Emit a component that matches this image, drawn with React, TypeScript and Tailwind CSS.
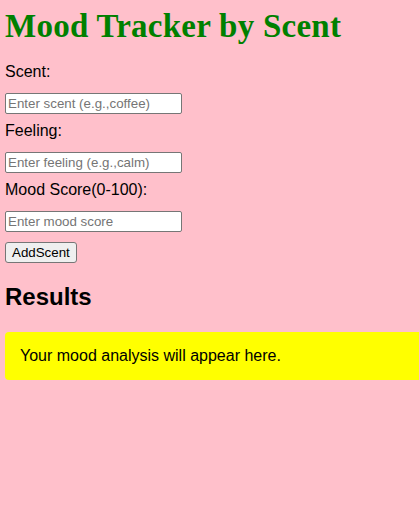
export default function App() {
  return (
    <div className="min-h-screen w-full overflow-hidden bg-[#ffc0cb] px-[5px] py-[5px] font-['Liberation_Sans',Arial,sans-serif] text-black">
      <h1 className="mt-[2px] text-[33px] leading-[38px] font-bold tracking-[0.25px] text-[#008000] font-['Liberation_Serif',Cambria,serif]">
        Mood Tracker by Scent
      </h1>

      <div className="mt-[18px] flex flex-col items-start">
        <label className="text-[16px] leading-[18px]">Scent:</label>
        <input
          type="text"
          placeholder="Enter scent (e.g.,coffee)"
          className="mt-[12px] h-[21px] w-[177px] rounded-[2px] border border-[#767676] bg-white px-[2px] text-[13.33px] placeholder:text-[#757575]"
        />

        <label className="mt-[8px] text-[16px] leading-[18px]">Feeling:</label>
        <input
          type="text"
          placeholder="Enter feeling (e.g.,calm)"
          className="mt-[12px] h-[21px] w-[177px] rounded-[2px] border border-[#767676] bg-white px-[2px] text-[13.33px] placeholder:text-[#757575]"
        />

        <label className="mt-[8px] text-[16px] leading-[18px]">Mood Score(0-100):</label>
        <input
          type="number"
          placeholder="Enter mood score"
          className="mt-[12px] h-[21px] w-[177px] rounded-[2px] border border-[#767676] bg-white px-[2px] text-[13.33px] placeholder:text-[#757575]"
        />

        <button className="mt-[10px] h-[21px] rounded-[3px] border border-[#767676] bg-[#efefef] px-[6px] text-[13.33px] leading-[17px]">
          AddScent
        </button>
      </div>

      <h2 className="mt-[20px] text-[24px] leading-[28px] font-bold">Results</h2>

      <div className="mt-[21px] w-[440px] rounded-[4px] bg-[#ffff00] p-[15px] text-[16px] leading-[18px]">
        Your mood analysis will appear here.
      </div>
    </div>
  );
}
